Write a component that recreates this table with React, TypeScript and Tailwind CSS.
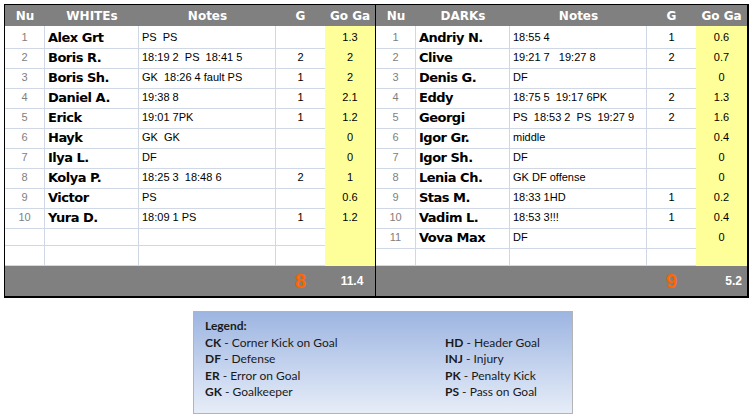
import React from 'react';

type Row = { nu?: number; name?: string; notes?: string; g?: string; goga?: string };

const whites: Row[] = [
  { nu: 1, name: 'Alex Grt', notes: 'PS  PS', goga: '1.3' },
  { nu: 2, name: 'Boris R.', notes: '18:19 2  PS  18:41 5', g: '2', goga: '2' },
  { nu: 3, name: 'Boris Sh.', notes: 'GK  18:26 4 fault PS', g: '1', goga: '2' },
  { nu: 4, name: 'Daniel A.', notes: '19:38 8', g: '1', goga: '2.1' },
  { nu: 5, name: 'Erick', notes: '19:01 7PK', g: '1', goga: '1.2' },
  { nu: 6, name: 'Hayk', notes: 'GK  GK', goga: '0' },
  { nu: 7, name: 'Ilya L.', notes: 'DF', goga: '0' },
  { nu: 8, name: 'Kolya P.', notes: '18:25 3  18:48 6', g: '2', goga: '1' },
  { nu: 9, name: 'Victor', notes: 'PS', goga: '0.6' },
  { nu: 10, name: 'Yura D.', notes: '18:09 1 PS', g: '1', goga: '1.2' },
  {},
  {},
];

const darks: Row[] = [
  { nu: 1, name: 'Andriy N.', notes: '18:55 4', g: '1', goga: '0.6' },
  { nu: 2, name: 'Clive', notes: '19:21 7   19:27 8', g: '2', goga: '0.7' },
  { nu: 3, name: 'Denis G.', notes: 'DF', goga: '0' },
  { nu: 4, name: 'Eddy', notes: '18:75 5  19:17 6PK', g: '2', goga: '1.3' },
  { nu: 5, name: 'Georgi', notes: 'PS  18:53 2  PS  19:27 9', g: '2', goga: '1.6' },
  { nu: 6, name: 'Igor Gr.', notes: 'middle', goga: '0.4' },
  { nu: 7, name: 'Igor Sh.', notes: 'DF', goga: '0' },
  { nu: 8, name: 'Lenia Ch.', notes: 'GK DF offense', goga: '0' },
  { nu: 9, name: 'Stas M.', notes: '18:33 1HD', g: '1', goga: '0.2' },
  { nu: 10, name: 'Vadim L.', notes: '18:53 3!!!', g: '1', goga: '0.4' },
  { nu: 11, name: 'Vova Max', notes: 'DF', goga: '0' },
  {},
];

const boldFont = { fontFamily: '"DejaVu Sans", Verdana, sans-serif' };
const cellFont = { fontFamily: '"Liberation Sans", Arial, sans-serif' };

function Team({ title, rows, goals, total, lastCol, totalRight }: {
  title: string; rows: Row[]; goals: string; total: string; lastCol: string; totalRight?: boolean;
}) {
  const cols = `grid ${lastCol}`;
  return (
    <div className="flex flex-col">
      <div className={`${cols} h-[21px] bg-[#808080] items-center text-white text-[12px] font-bold`} style={boldFont}>
        <div className="text-center">Nu</div>
        <div className="text-center">{title}</div>
        <div className="text-center">Notes</div>
        <div className="text-center">G</div>
        <div className="text-center">Go Ga</div>
      </div>
      {rows.map((r, i) => (
        <div key={i} className={`${cols} h-[20px]`}>
          <div className="border-r border-b border-[#d0d7e5] flex items-center justify-center text-[11px] text-[#808080]" style={cellFont}>
            {r.nu}
          </div>
          <div className="border-r border-b border-[#d0d7e5] flex items-center pl-[3px] pt-[2px] text-[13px] font-bold text-black tracking-[-0.5px]" style={boldFont}>
            {r.name}
          </div>
          <div className="border-r border-b border-[#d0d7e5] flex items-center pl-[3px] text-[11px] text-black whitespace-pre" style={cellFont}>
            {r.notes}
          </div>
          <div className="border-b border-[#d0d7e5] flex items-center justify-center text-[11px] text-black" style={cellFont}>
            {r.g}
          </div>
          <div className="bg-[#ffff99] flex items-center justify-center text-[11px] text-black" style={cellFont}>
            {r.goga}
          </div>
        </div>
      ))}
      <div className={`${cols} h-[30px] bg-[#808080] items-center font-bold`} style={cellFont}>
        <div />
        <div />
        <div />
        <div className="text-center text-[20px] text-[#ff6600]">{goals}</div>
        <div className={`text-[12px] text-white ${totalRight ? 'text-right pr-[5px]' : 'text-center pl-[4px]'}`}>{total}</div>
      </div>
    </div>
  );
}

const legendLeft = [
  ['CK', 'Corner Kick on Goal'],
  ['DF', 'Defense'],
  ['ER', 'Error on Goal'],
  ['GK', 'Goalkeeper'],
];
const legendRight = [
  ['HD', 'Header Goal'],
  ['INJ', 'Injury'],
  ['PK', 'Penalty Kick'],
  ['PS', 'Pass on Goal'],
];

export default function App() {
  return (
    <div className="w-[752px] h-[419px] bg-white overflow-hidden">
      <div className="ml-[4px] mt-[4px] w-[745px] flex border-t border-l border-black border-b-2 border-r-2">
        <Team title="WHITEs" rows={whites} goals="8" total="11.4" lastCol="grid-cols-[40px_94px_137px_49px_50px]" />
        <div className="w-px bg-black" />
        <Team title="DARKs" rows={darks} goals="9" total="5.2" lastCol="grid-cols-[40px_94px_137px_49px_51px]" totalRight />
      </div>
      <div
        className="ml-[193px] mt-[13px] w-[380px] h-[103px] border border-[#b4b4b4] bg-gradient-to-b from-[#9db5e1] to-[#e7edf8] pl-[11px] pt-[6px] text-[12px] text-[#1a1a1a] leading-[16.6px]"
        style={{ fontFamily: 'Lato, "Liberation Sans", sans-serif' }}
      >
        <div className="font-bold">Legend:</div>
        <div className="grid grid-cols-[240px_1fr]">
          <div>
            {legendLeft.map(([k, v]) => (
              <div key={k}><span className="font-bold">{k}</span> - {v}</div>
            ))}
          </div>
          <div>
            {legendRight.map(([k, v]) => (
              <div key={k}><span className="font-bold">{k}</span> - {v}</div>
            ))}
          </div>
        </div>
      </div>
    </div>
  );
}
